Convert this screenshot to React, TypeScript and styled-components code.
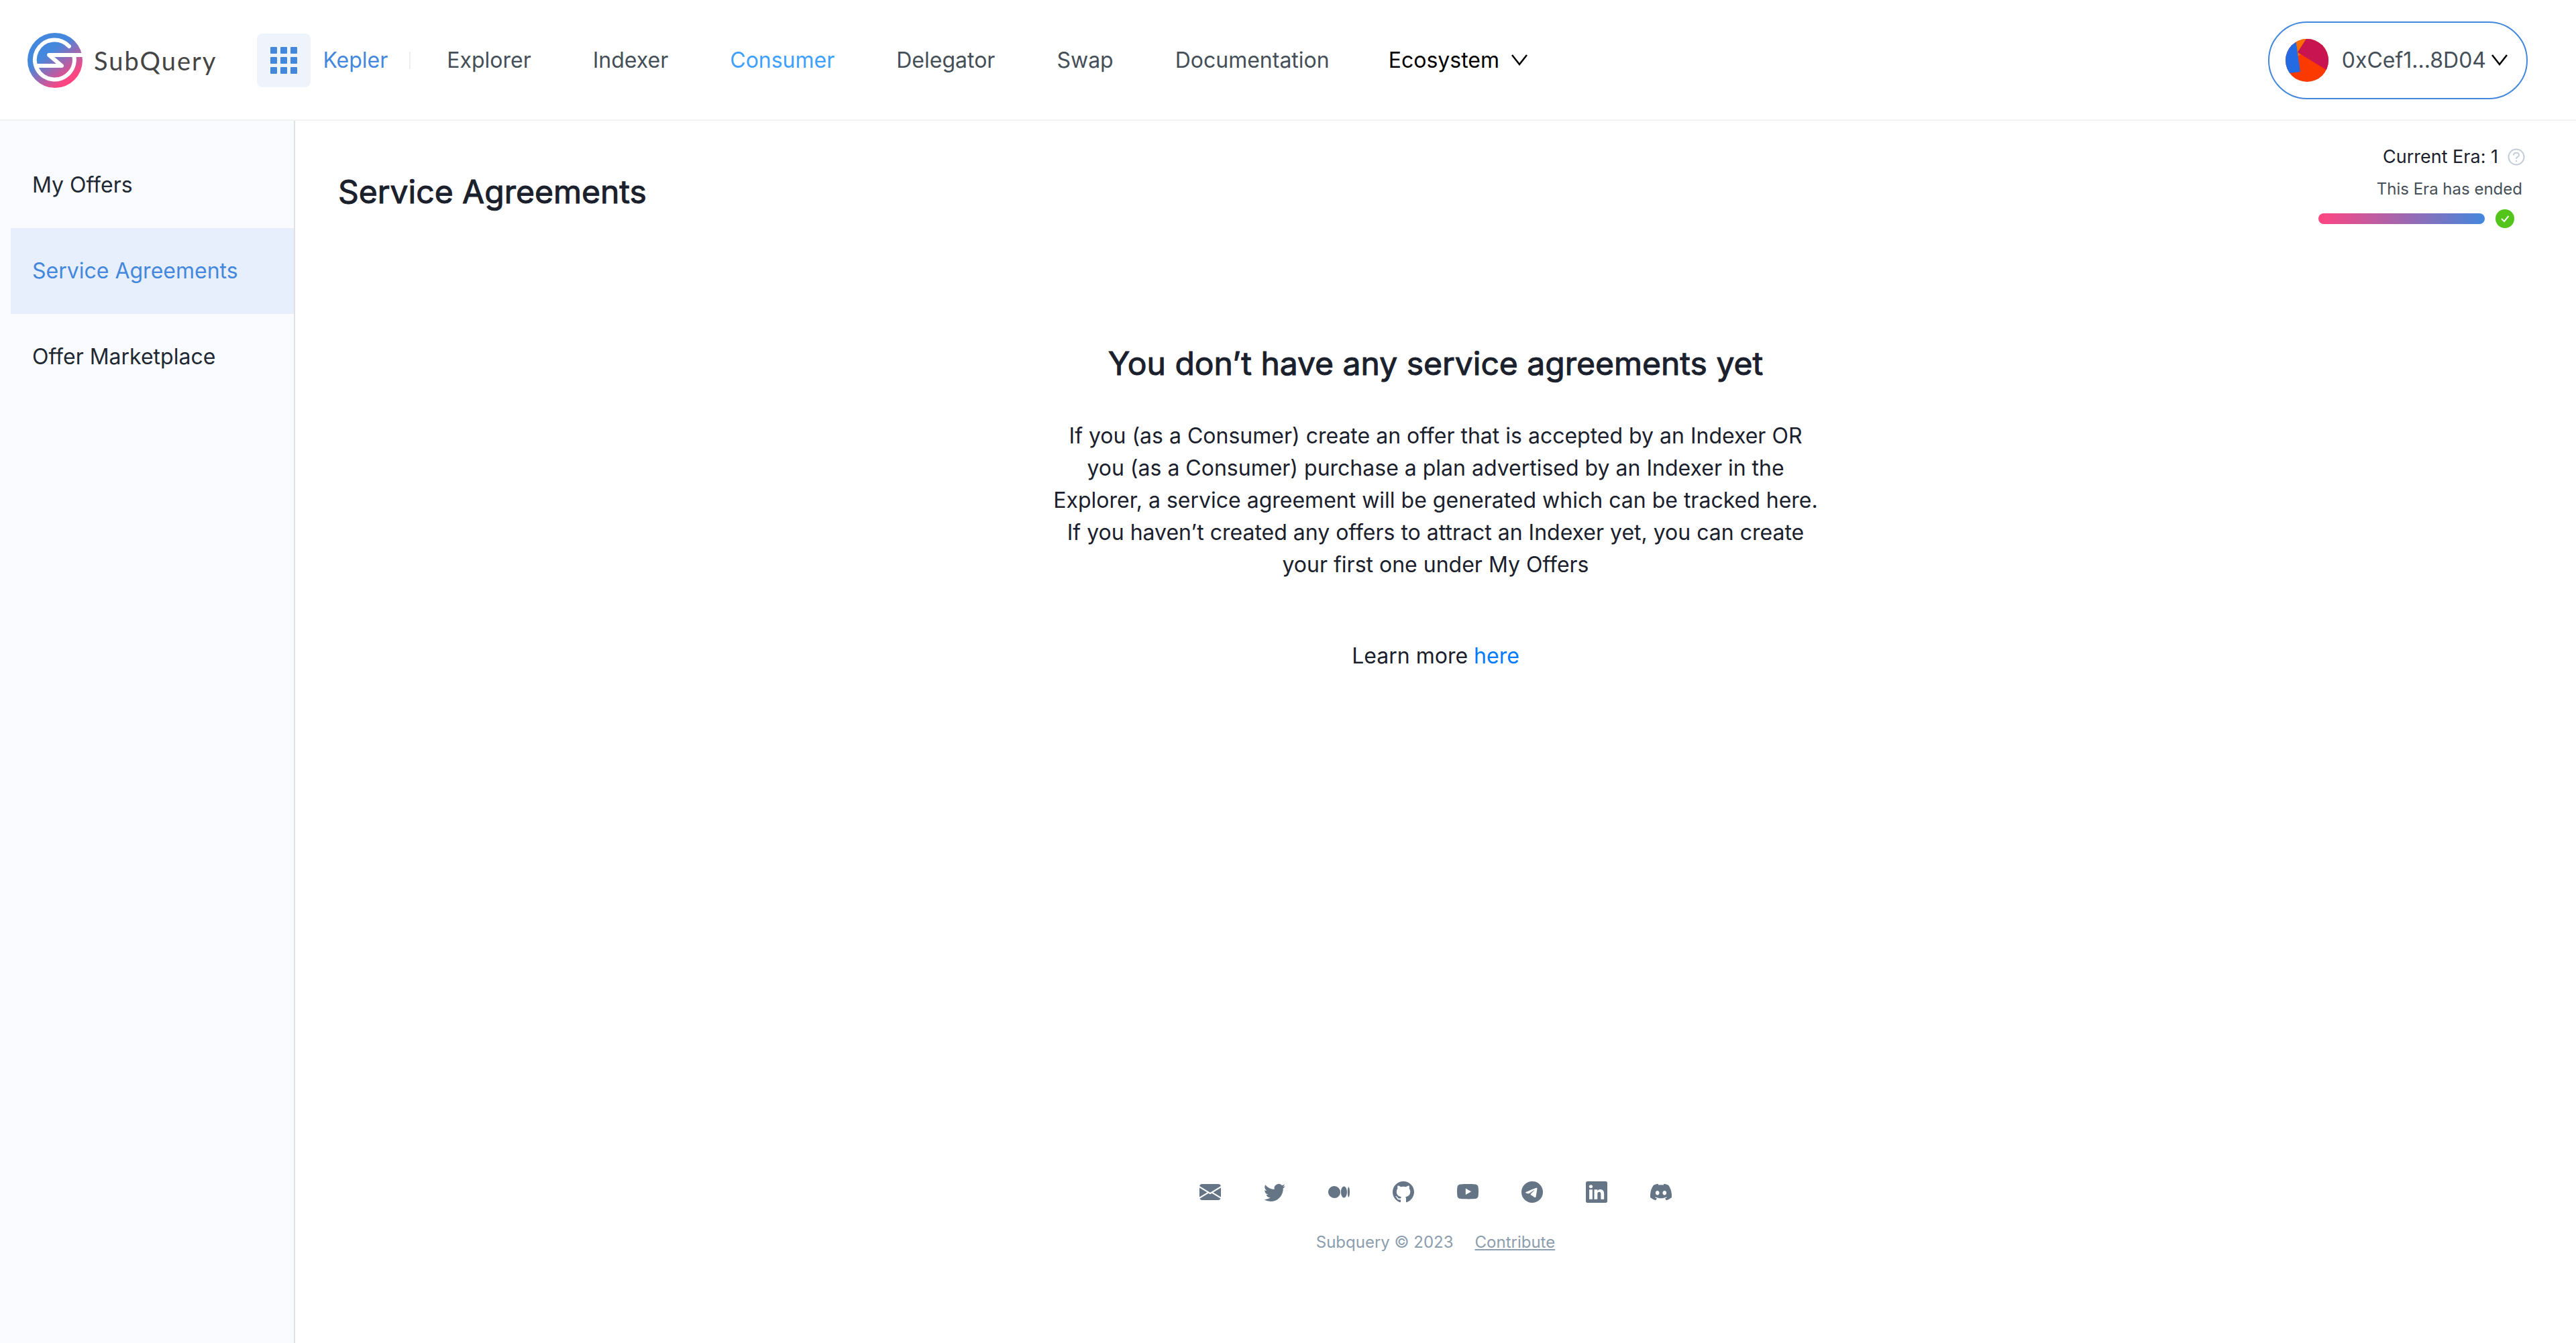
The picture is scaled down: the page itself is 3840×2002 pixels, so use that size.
import React from "react";
import styled, { createGlobalStyle } from "styled-components";
import {
  BsDiscord,
  BsEnvelopeFill,
  BsGithub,
  BsLinkedin,
  BsMedium,
  BsTelegram,
  BsTwitter,
  BsYoutube,
} from "react-icons/bs";

const GlobalStyle = createGlobalStyle`
  *, *::before, *::after { box-sizing: border-box; }
  body {
    margin: 0;
    background: #fff;
    color: #1a202c;
    font-family: Inter, "Liberation Sans", sans-serif;
    font-size: 32px;
    line-height: 48px;
  }
  a { color: inherit; text-decoration: none; }
  button { font: inherit; color: inherit; background: none; border: 0; padding: 0; cursor: pointer; }
  svg { display: block; flex: none; }
`;

const Page = styled.div`
  display: flex;
  flex-direction: column;
  min-height: 100vh;
`;

const Header = styled.header`
  display: flex;
  align-items: center;
  height: 180px;
  padding: 2px 72px 0 40px;
  border-bottom: 2px solid #f3f3f3;
`;

const Brand = styled.a`
  display: flex;
  align-items: center;
  gap: 16px;
  color: #454545;
  font-family: Lato, sans-serif;
  font-size: 38px;
  letter-spacing: 2px;
`;

const AppSwitcher = styled.button`
  display: flex;
  align-items: center;
  gap: 18px;
  margin-left: 60px;
  color: #4388dd;
`;

const GridTile = styled.span`
  display: grid;
  place-items: center;
  width: 80px;
  height: 80px;
  border-radius: 8px;
  background: #eef3fc;
`;

const Separator = styled.span`
  width: 2px;
  height: 26px;
  margin: 0 8px 0 32px;
  background: #eee;
`;

const Nav = styled.nav`
  display: flex;
  flex: 1;
  color: #454f58;
`;

const NavLink = styled.a<{ $active?: boolean }>`
  padding: 0 46px;
  color: ${(p) => (p.$active ? "#3ea0ff" : "inherit")};
`;

const Ecosystem = styled.button`
  display: flex;
  align-items: center;
  gap: 18px;
  margin-left: 42px;
  color: #000;
`;

const Account = styled.button`
  display: flex;
  align-items: center;
  height: 116px;
  padding: 0 28px 0 24px;
  gap: 8px;
  border: 2px solid #4388dd;
  border-radius: 58px;
  color: #454f58;
`;

const Address = styled.span`
  margin-left: 12px;
`;

const Body = styled.div`
  display: flex;
  flex: 1;
`;

const Sidebar = styled.nav`
  width: 440px;
  padding: 32px 0 0 16px;
  border-right: 2px solid #dee2e6;
  background: #fafbff;
`;

const SideLink = styled.a<{ $active?: boolean }>`
  display: block;
  padding: 40px 32px;
  color: ${(p) => (p.$active ? "#4388dd" : "#1f2933")};
  background: ${(p) => (p.$active ? "#e8effc" : "transparent")};
`;

const Main = styled.main`
  display: flex;
  flex: 1;
  flex-direction: column;
  padding: 30px 64px 126px;
`;

const TitleBar = styled.div`
  display: flex;
  align-items: flex-start;
  justify-content: space-between;
`;

const Title = styled.h1`
  margin: 40px 0 0;
  font-size: 48px;
  font-weight: 400;
  line-height: 72px;
  -webkit-text-stroke: 1px currentColor;
`;

const Era = styled.section`
  display: flex;
  flex-direction: column;
  align-items: flex-end;
  padding-right: 8px;
`;

const EraName = styled.div`
  display: flex;
  align-items: center;
  gap: 14px;
  padding-right: 4px;
  font-size: 27px;
`;

const EraNote = styled.div`
  padding-right: 8px;
  color: #454f58;
  font-size: 24px;
`;

const EraProgress = styled.div`
  display: flex;
  align-items: center;
  gap: 16px;
  height: 40px;
  padding-right: 20px;
`;

const Track = styled.div`
  width: 248px;
  height: 16px;
  border-radius: 8px;
  background: linear-gradient(90deg, #ff4581, #4388dd);
`;

const Empty = styled.section`
  display: flex;
  flex: 1;
  flex-direction: column;
  align-items: center;
  padding-top: 160px;
  text-align: center;
`;

const EmptyTitle = styled(Title).attrs({ as: "h2" })`
  margin: 0 0 48px;
`;

const Copy = styled.p`
  max-width: 1144px;
  margin: 0 0 88px;
`;

const TextLink = styled.a`
  color: #007bff;
`;

const Footer = styled.footer`
  display: flex;
  flex-direction: column;
  align-items: center;
  gap: 35px;
  color: #8c9dae;
  font-size: 24px;
`;

const Socials = styled.div`
  display: flex;
  gap: 64px;
  color: #667585;
  font-size: 32px;
`;

const Legal = styled.div`
  display: flex;
  gap: 32px;
`;

const Contribute = styled.a`
  text-decoration: underline;
`;

const Logo = () => (
  <svg width="84" height="84" viewBox="0 0 84 84" fill="none" aria-hidden="true">
    <defs>
      <linearGradient id="brand" x1="24" y1="20" x2="66" y2="76" gradientUnits="userSpaceOnUse">
        <stop offset="0.2" stopColor="#4388dd" />
        <stop offset="0.9" stopColor="#ff4581" />
      </linearGradient>
    </defs>
    <circle cx="42" cy="42" r="41" fill="url(#brand)" />
    <path
      d="M63 21A29.5 29.5 0 1 0 70 34M84 34H33L52 50H16"
      stroke="#fff"
      strokeWidth="6"
      strokeLinecap="round"
      strokeLinejoin="round"
    />
  </svg>
);

const GridIcon = () => (
  <svg width="40" height="40" viewBox="0 0 40 40" fill="#4388dd" aria-hidden="true">
    {[0, 15, 30].map((y) => [0, 15, 30].map((x) => <rect key={`${x}-${y}`} x={x} y={y} width="10" height="10" rx="1" />))}
  </svg>
);

const Chevron = () => (
  <svg width="24" height="18" viewBox="0 0 24 18" fill="none" stroke="#000" strokeWidth="2.6" aria-hidden="true">
    <path d="M1 1L12 15L23 1" />
  </svg>
);

const Avatar = () => (
  <svg width="64" height="64" viewBox="0 0 64 64" aria-hidden="true">
    <clipPath id="face">
      <circle cx="32" cy="32" r="32" />
    </clipPath>
    <g clipPath="url(#face)">
      <path d="M0 0H64V64H0Z" fill="#fa3a00" />
      <path d="M14 0H34L19 20L23 23L18 26Z" fill="#fb6e00" />
      <path d="M32 -2L18 20L64 48V-2Z" fill="#c81450" />
      <path d="M-2 0H15L22 49L-2 52Z" fill="#236ae3" />
    </g>
  </svg>
);

const HelpIcon = () => (
  <svg width="26" height="26" viewBox="0 0 26 26" fill="none" stroke="#c4cdd8" strokeWidth="2" aria-hidden="true">
    <circle cx="13" cy="13" r="11.5" />
    <path d="M9 10.5C9 5.5 17 5.5 17 10.5C17 13 13 12.5 13 16M13 18V20" />
  </svg>
);

const DoneIcon = () => (
  <svg width="28" height="28" viewBox="0 0 28 28" fill="none" aria-hidden="true">
    <circle cx="14" cy="14" r="14" fill="#52c41a" />
    <path d="M9 14L13 18L19.500 10" stroke="#fff" strokeWidth="2" />
  </svg>
);

const navItems = ["Explorer", "Indexer", "Consumer", "Delegator", "Swap", "Documentation"];
const sideItems = ["My Offers", "Service Agreements", "Offer Marketplace"];
const socials = [
  { name: "Email", Icon: BsEnvelopeFill },
  { name: "Twitter", Icon: BsTwitter },
  { name: "Medium", Icon: BsMedium },
  { name: "GitHub", Icon: BsGithub },
  { name: "YouTube", Icon: BsYoutube },
  { name: "Telegram", Icon: BsTelegram },
  { name: "LinkedIn", Icon: BsLinkedin },
  { name: "Discord", Icon: BsDiscord },
];

export default function App() {
  return (
    <Page>
      <GlobalStyle />
      <Header>
        <Brand href="#">
          <Logo />
          SubQuery
        </Brand>
        <AppSwitcher>
          <GridTile>
            <GridIcon />
          </GridTile>
          Kepler
        </AppSwitcher>
        <Separator />
        <Nav>
          {navItems.map((item) => (
            <NavLink key={item} href="#" $active={item === "Consumer"}>
              {item}
            </NavLink>
          ))}
          <Ecosystem>
            Ecosystem
            <Chevron />
          </Ecosystem>
        </Nav>
        <Account>
          <Avatar />
          <Address>0xCef1...8D04</Address>
          <Chevron />
        </Account>
      </Header>
      <Body>
        <Sidebar>
          {sideItems.map((item) => (
            <SideLink key={item} href="#" $active={item === "Service Agreements"}>
              {item}
            </SideLink>
          ))}
        </Sidebar>
        <Main>
          <TitleBar>
            <Title>Service Agreements</Title>
            <Era>
              <EraName>
                Current Era: 1
                <HelpIcon />
              </EraName>
              <EraNote>This Era has ended</EraNote>
              <EraProgress>
                <Track />
                <DoneIcon />
              </EraProgress>
            </Era>
          </TitleBar>
          <Empty>
            <EmptyTitle>You don’t have any service agreements yet</EmptyTitle>
            <Copy>
              If you (as a Consumer) create an offer that is accepted by an Indexer OR you (as a Consumer) purchase a
              plan advertised by an Indexer in the Explorer, a service agreement will be generated which can be tracked
              here. If you haven’t created any offers to attract an Indexer yet, you can create your first one under My
              Offers
            </Copy>
            <div>
              Learn more <TextLink href="#">here</TextLink>
            </div>
          </Empty>
          <Footer>
            <Socials>
              {socials.map(({ name, Icon }) => (
                <a key={name} href="#" aria-label={name}>
                  <Icon />
                </a>
              ))}
            </Socials>
            <Legal>
              <span>Subquery © 2023</span>
              <Contribute href="#">Contribute</Contribute>
            </Legal>
          </Footer>
        </Main>
      </Body>
    </Page>
  );
}
